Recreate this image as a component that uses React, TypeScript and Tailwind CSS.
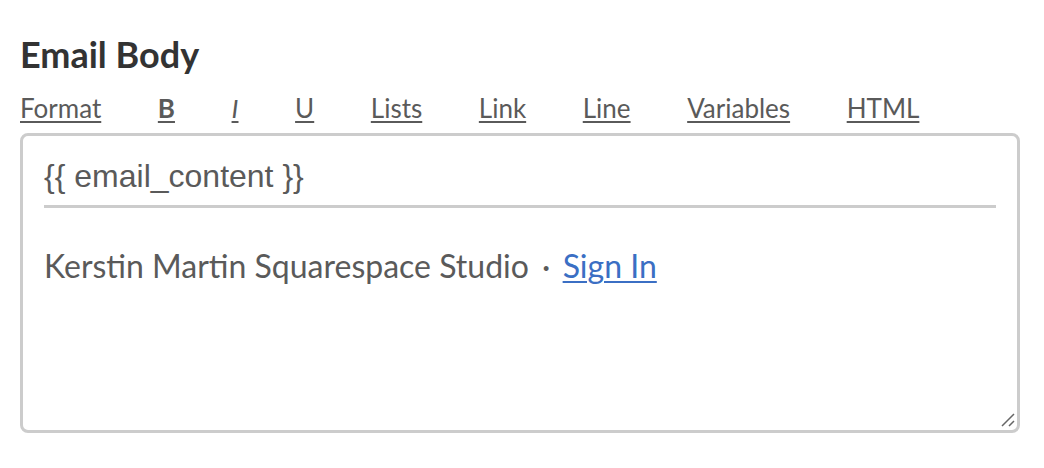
const TOOLS = ["Format", "B", "I", "U", "Lists", "Link", "Line", "Variables", "HTML"];

function ToolLabel({ label }: { label: string }) {
  if (label === "B") return <span className="font-bold">B</span>;
  if (label === "I") return <span className="italic">I</span>;
  return <span>{label}</span>;
}

export default function App() {
  return (
    <main
      className="min-h-[468px] w-[1044px] bg-white px-5 pt-[32px] text-[#333]"
      style={{ fontFamily: "Lato, 'Noto Sans', sans-serif" }}
    >
      <h2 className="text-[36px] font-bold leading-[44px] text-[#333]">Email Body</h2>
      <nav className="mt-[17px] flex gap-[56.6px] text-[26px] leading-[30px] text-[#5a5a5a]">
        {TOOLS.map((tool) => (
          <a key={tool} href="#" className="underline decoration-[2px] underline-offset-[3px]">
            <ToolLabel label={tool} />
          </a>
        ))}
      </nav>
      <div className="relative mt-[10px] h-[300px] w-[1000px] rounded-[8px] border-[3px] border-[#cccccc] bg-white px-[21px] pt-[22px]">
        <p
          className="text-[32px] leading-[36px] text-[#5a5a5a]"
          style={{ fontFamily: "'Liberation Sans', Arial, sans-serif" }}
        >
          {"{{ email_content }}"}
        </p>
        <div className="mt-[11px] h-[3px] w-full bg-[#cccccc]" />
        <p className="mt-[39px] text-[32px] leading-[38px] text-[#5a5a5a]">
          Kerstin Martin Squarespace Studio{" "}
          <span className="ml-[5px] mr-[4px]">·</span>{" "}
          <a href="#" className="text-[#3b6fc4] underline decoration-[2px] underline-offset-[3px]">
            Sign In
          </a>
        </p>
        <svg
          className="absolute bottom-[3px] right-[2px]"
          width="14"
          height="14"
          viewBox="0 0 14 14"
          aria-hidden="true"
        >
          <path d="M1 13 L13 1 M8 13 L13 8" stroke="#666" strokeWidth="1.5" />
        </svg>
      </div>
    </main>
  );
}
